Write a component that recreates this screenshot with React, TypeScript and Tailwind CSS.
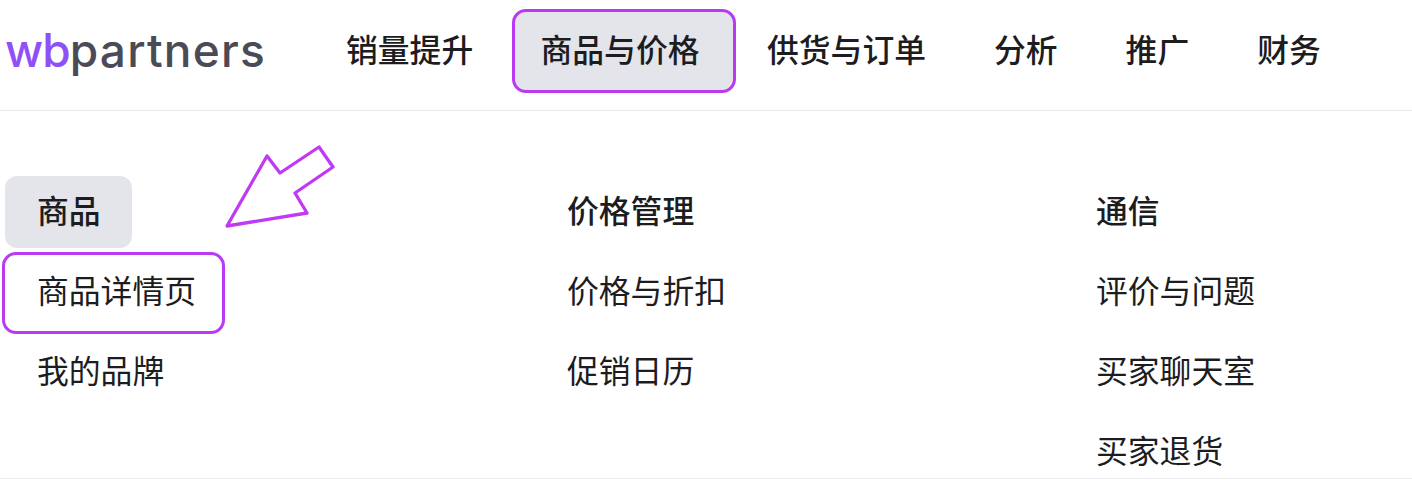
const cjk = "font-['Inter','Noto_Sans_CJK_SC',sans-serif]";

function NavItem({ label }: { label: string }) {
  return <div className="flex h-[84px] items-center px-[34px] font-medium whitespace-nowrap">{label}</div>;
}

function Row({ label, bold }: { label: string; bold?: boolean }) {
  return (
    <div className={`flex h-[72px] w-fit items-center pl-[32px] pr-[31px] rounded-xl ${bold ? "font-medium" : ""}`}>{label}</div>
  );
}

export default function App() {
  return (
    <div className={`relative h-[480px] w-[1412px] overflow-hidden bg-white text-[31.8px] leading-none text-[#1c1c21] ${cjk}`}>
      <header className="flex h-[111px] items-start border-b border-[#e9e9ec] pt-[9px]">
        <div className="flex h-[84px] w-[312px] items-center pb-[2px] pl-[5px]">
          <span className="font-['Inter',sans-serif] text-[46px] font-medium tracking-[-0.9px] text-[#4b4a57]">
            <span className="text-[#8f50f7]">wb</span>
            <span className="tracking-[1.2px]">partners</span>
          </span>
        </div>
        <NavItem label="销量提升" />
        <div className="ml-[4.8px] mr-[-3px] flex h-[84px] w-[224px] items-center rounded-[14px] border-[3.5px] border-[#b93af2] bg-[#e3e5ea] pl-[25.5px] font-medium whitespace-nowrap">
          商品与价格
        </div>
        <NavItem label="供货与订单" />
        <NavItem label="分析" />
        <NavItem label="推广" />
        <NavItem label="财务" />
      </header>

      <main className="grid h-[368px] grid-cols-[530px_529px_1fr] gap-y-2 border-b border-[#eeeef0] pl-[5px] pt-[65px]">
        <div className="flex flex-col gap-2">
          <div className="flex h-[72px] w-[127px] items-center rounded-xl bg-[#e3e5ea] pl-[32px] font-medium">商品</div>
          <div className="relative">
            <Row label="商品详情页" />
            <span className="absolute -bottom-[6px] -left-[3.5px] -top-[4px] w-[223px] rounded-[14px] border-[3.5px] border-[#b93af2]" />
          </div>
          <Row label="我的品牌" />
        </div>
        <div className="flex flex-col gap-2">
          <Row label="价格管理" bold />
          <Row label="价格与折扣" />
          <Row label="促销日历" />
        </div>
        <div className="flex flex-col gap-2">
          <Row label="通信" bold />
          <Row label="评价与问题" />
          <Row label="买家聊天室" />
          <Row label="买家退货" />
        </div>
      </main>

      <svg className="absolute left-0 top-0" width="400" height="260" fill="none">
        <polygon
          points="227,226 267,156 280,173 319,147 333,167 295,193 307,213"
          stroke="#c03af5"
          strokeWidth="3.3"
          strokeLinejoin="round"
        />
      </svg>
    </div>
  );
}
